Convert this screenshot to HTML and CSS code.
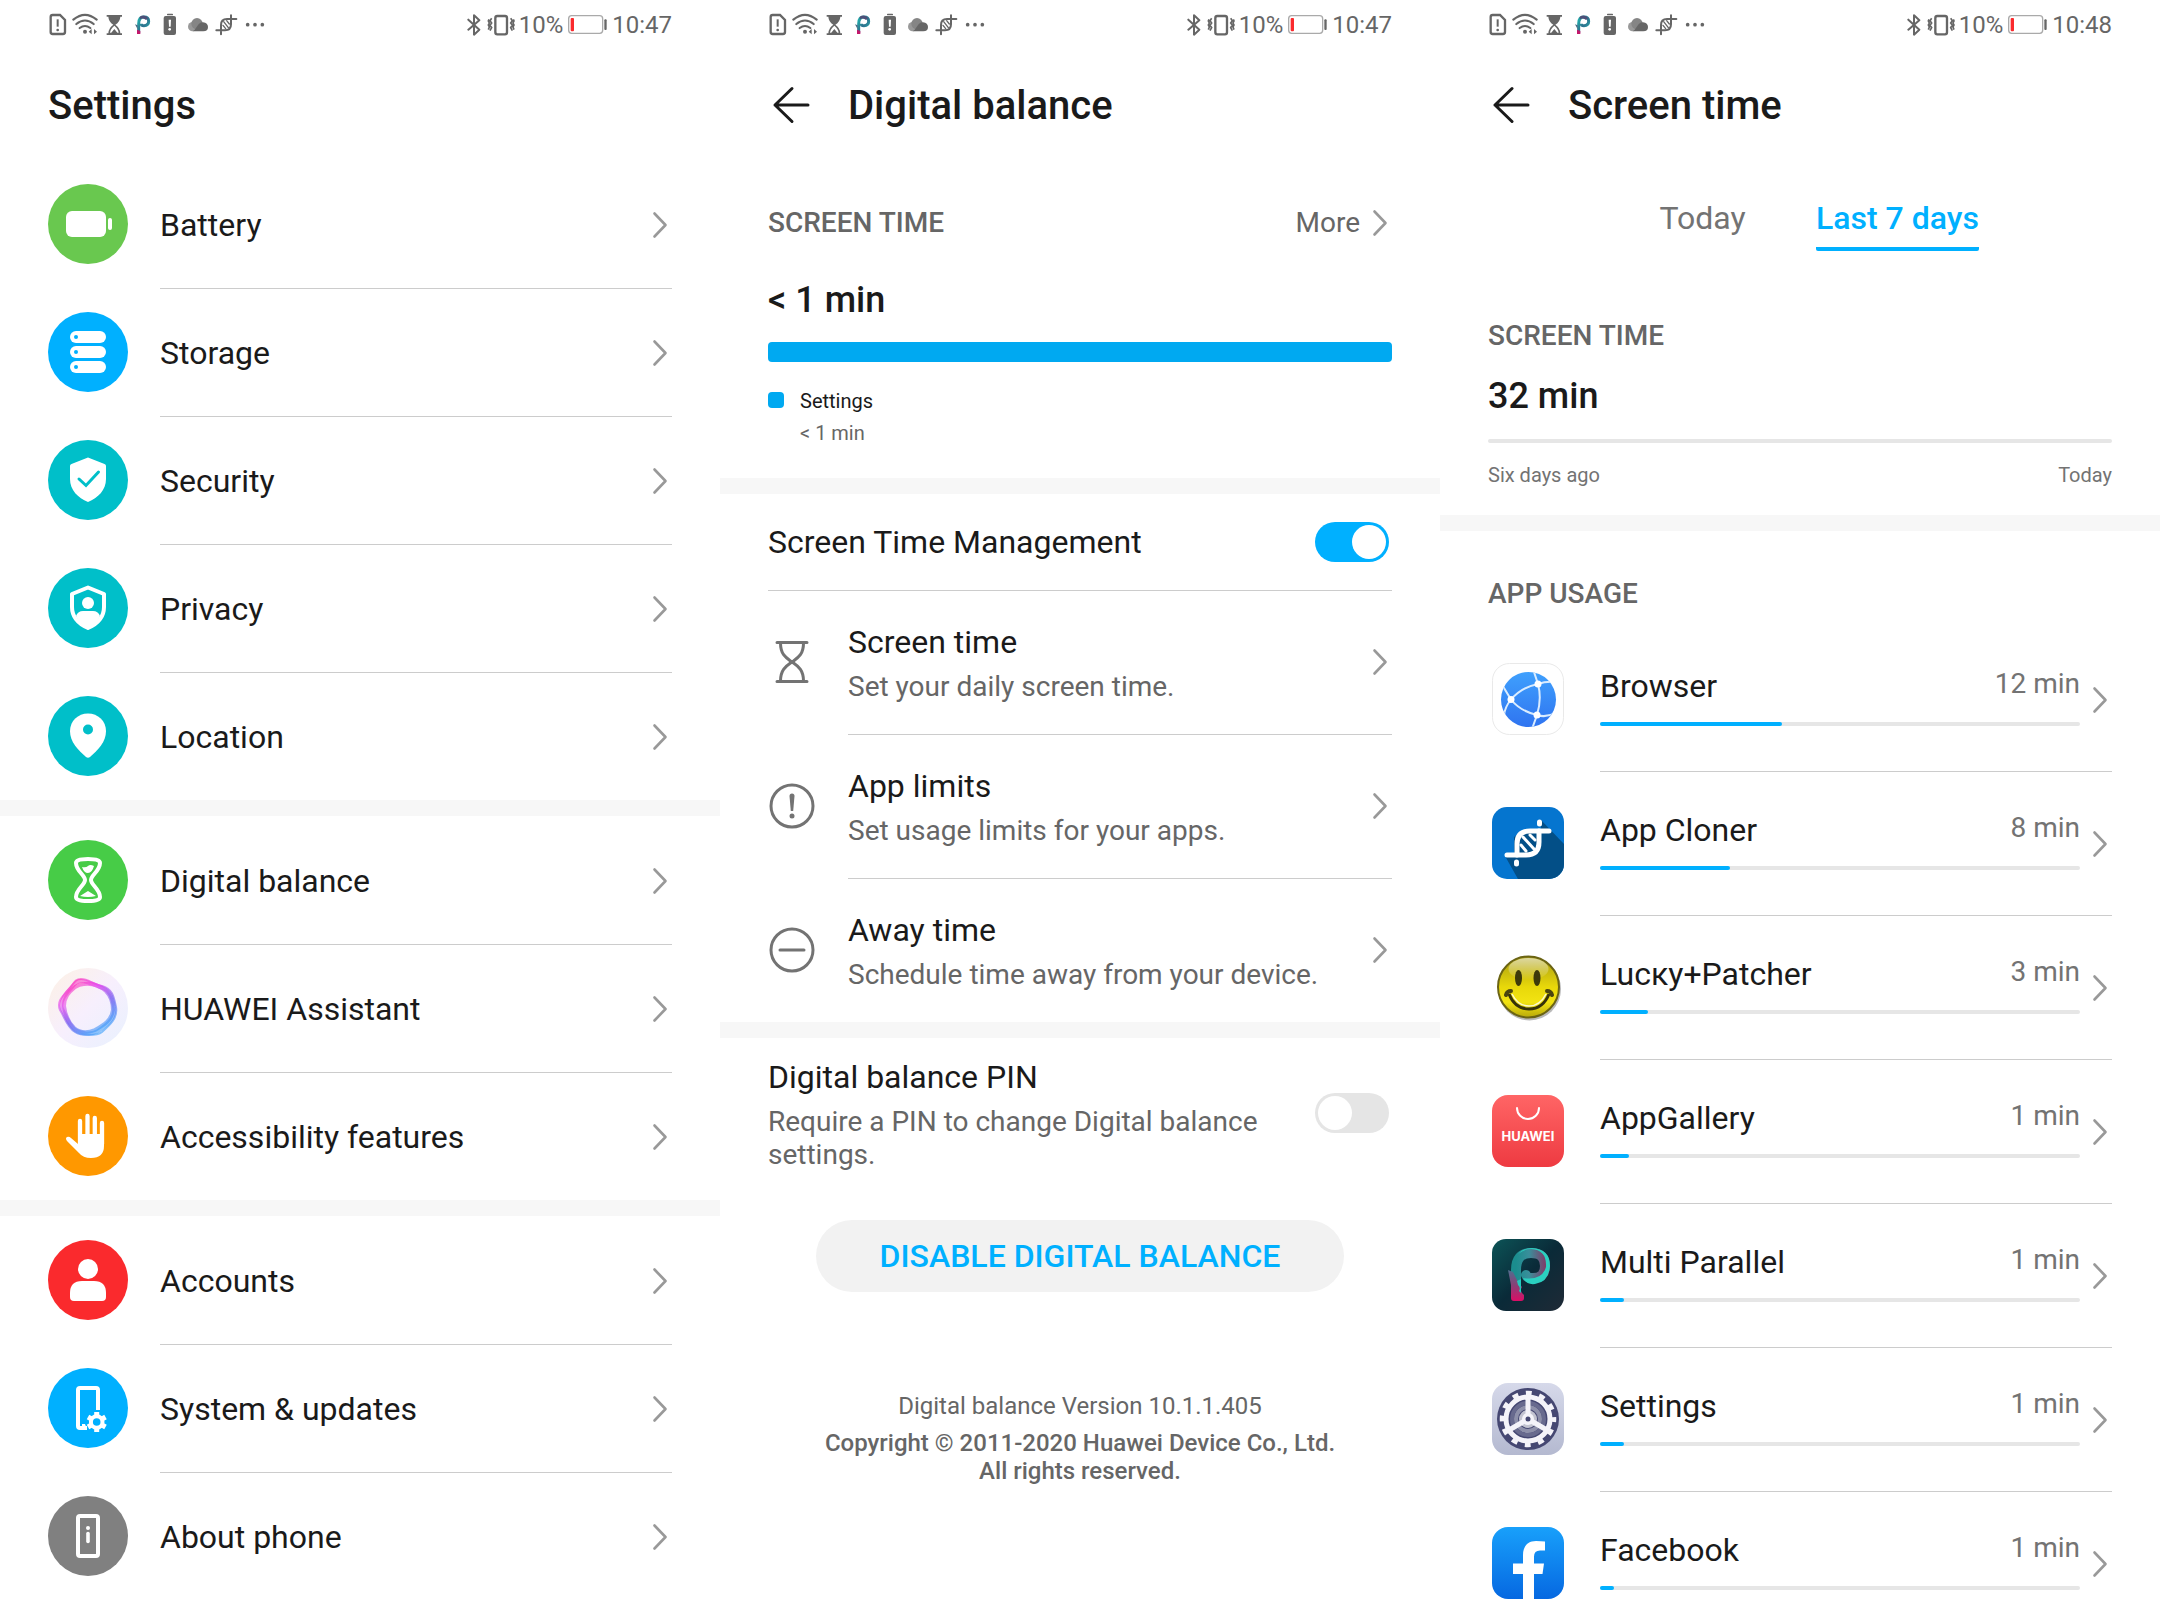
FILE: index.html
```html
<!DOCTYPE html>
<html lang="en">
<head>
    <meta charset="UTF-8">
    <meta name="viewport" content="width=device-width, initial-scale=1.0">
    <title>Digital balance</title>
    <link rel="stylesheet" href="styles.css">
</head>
<body>
    <!-- Shared icons -->
    <svg class="sprite" width="0" height="0" aria-hidden="true">
        <defs>
            <linearGradient id="p-small" x1="0" y1="0" x2="1" y2="1">
                <stop offset="0" stop-color="#1fb5b0"/>
                <stop offset="0.5" stop-color="#2f6f8c"/>
                <stop offset="1" stop-color="#22b8b4"/>
            </linearGradient>
        </defs>
        <symbol id="chevron" viewBox="0 0 24 32">
            <path d="M6.500 4.500L17.500 16 6.500 27.500" fill="none" stroke="#999" stroke-width="2.600" stroke-linecap="round" stroke-linejoin="round"/>
        </symbol>
        <symbol id="back" viewBox="0 0 48 48">
            <path d="M40 24H7M24 7.500L7 24l17 16.500" fill="none" stroke="#1a1a1a" stroke-width="3" stroke-linecap="round" stroke-linejoin="round"/>
        </symbol>
        <symbol id="notifications" viewBox="24 24 654 72">
            <!-- sim card -->
            <path d="M38 30h22l15 15v36q0 6-6 6H38q-6 0-6-6V36q0-6 6-6z" fill="none" stroke="#666" stroke-width="7"/>
            <path d="M53 43v22" stroke="#666" stroke-width="6"/>
            <circle cx="53" cy="75" r="4" fill="#666"/>
            <!-- wifi -->
            <g fill="none" stroke="#666" stroke-width="6.500" stroke-linecap="round">
                <path d="M100 44q35-29 70 0"/>
                <path d="M109 57q26-21 52 0"/>
                <path d="M119 69q16-12 32 0"/>
            </g>
            <circle cx="135" cy="80" r="6" fill="#666"/>
            <path d="M155 72v16l-9-8zM162 72v16l9-8z" fill="#666"/>
            <!-- hourglass -->
            <path d="M200 30h46v5h-5q-1 16-15 24 14 9 15 26h5v5h-46v-5h5q1-17 15-26-14-8-15-24h-5z" fill="#666"/>
            <path d="M223 62q12 10 13 21h-5q-8-9-8-9t-8 9h-5q1-11 13-21z" fill="#fff"/>
            <path d="M223 72l10 13h-20z" fill="#666"/>
            <!-- multi parallel -->
            <path d="M296 84V56q0-20 16-20 14 0 14 13t-14 13q-8 0-8-6" fill="none" stroke="url(#p-small)" stroke-width="9"/>
            <path d="M299 35q14-8 25 4l-6 6q-8-8-19-2z" fill="#4d4f78"/>
            <path d="M291 74l10 4v9h-10z" fill="#c2186b"/>
            <path d="M285 58l8 3v12z" fill="#4d6a85"/>
            <!-- low battery -->
            <rect x="381" y="26" width="18" height="5" rx="2" fill="#666"/>
            <rect x="371" y="33" width="37" height="57" rx="6" fill="#666"/>
            <path d="M386 44h7l-1 21h-5z" fill="#fff"/>
            <circle cx="389" cy="73" r="4" fill="#fff"/>
            <!-- cloud -->
            <circle cx="458" cy="65" r="14" fill="#999"/>
            <circle cx="471" cy="56" r="17" fill="#858585"/>
            <path d="M458 79q6-3 12-13 8-15 19-14 15 2 15 14 0 13-14 13z" fill="#666"/>
            <!-- dna -->
            <g fill="none" stroke="#666" stroke-width="6" stroke-linecap="round">
                <path d="M529 76h26q18 0 18-18V42"/>
                <path d="M589 42h-28q-18 0-18 18v16"/>
                <path d="M573 31v8M543 80v8"/>
                <path d="M551 50l14 18M560 47l8 10M549 61l8 10" stroke-width="4"/>
            </g>
            <!-- more -->
            <g fill="#666"><circle cx="623" cy="59" r="5.500"/><circle cx="645" cy="59" r="5.500"/><circle cx="667" cy="59" r="5.500"/></g>
        </symbol>
        <symbol id="radios" viewBox="24 24 144 72">
            <path d="M28 44l33 30-16 15V31l16 15-33 28" fill="none" stroke="#666" stroke-width="6" stroke-linecap="round" stroke-linejoin="round"/>
            <rect x="109" y="33" width="35" height="55" rx="6" fill="none" stroke="#666" stroke-width="7"/>
            <path d="M98 40l-5 7 5 7-5 7 5 7-5 9M90 43l-2 5 3 6-3 6 3 6-3 8M155 40l5 7-5 7 5 7-5 7 5 9M163 43l2 5-3 6 3 6-3 6 3 8" fill="none" stroke="#666" stroke-width="5"/>
        </symbol>
        <symbol id="charge" viewBox="321 24 123 72">
            <rect x="326" y="32" width="102" height="53" rx="9" fill="#fff" stroke="#aaa" stroke-width="4"/>
            <rect x="332" y="39" width="10" height="40" rx="3" fill="#fa2a2d"/>
            <rect x="433" y="43" width="7" height="32" rx="3" fill="#666"/>
        </symbol>
    </svg>

    <div class="screens">
        <!-- Settings -->
        <section class="screen">
            <div class="status-bar">
                <svg class="notifications"><use href="#notifications"/></svg>
                <div class="status-right">
                    <svg class="radios"><use href="#radios"/></svg>
                    <span>10%</span>
                    <svg class="charge"><use href="#charge"/></svg>
                    <span>10:47</span>
                </div>
            </div>
            <header class="title-bar">
                <h1>Settings</h1>
            </header>
            <nav class="settings-list">
                <a class="settings-row" href="#battery">
                    <svg class="round-icon" viewBox="0 0 80 80">
                        <circle cx="40" cy="40" r="40" fill="#69c84f"/>
                        <rect x="18" y="27" width="40" height="26" rx="6" fill="#fff"/>
                        <rect x="60" y="34" width="4" height="12" rx="2" fill="#fff"/>
                    </svg>
                    <span class="row-body">Battery <svg class="chevron"><use href="#chevron"/></svg></span>
                </a>
                <a class="settings-row" href="#storage">
                    <svg class="round-icon" viewBox="0 0 80 80">
                        <circle cx="40" cy="40" r="40" fill="#00b0ff"/>
                        <g fill="#fff">
                            <rect x="22" y="19" width="36" height="12" rx="6"/>
                            <rect x="22" y="34" width="36" height="12" rx="6"/>
                            <rect x="22" y="49" width="36" height="12" rx="6"/>
                        </g>
                        <g fill="#00b0ff"><circle cx="28" cy="25" r="2"/><circle cx="28" cy="40" r="2"/><circle cx="28" cy="55" r="2"/></g>
                    </svg>
                    <span class="row-body">Storage <svg class="chevron"><use href="#chevron"/></svg></span>
                </a>
                <a class="settings-row" href="#security">
                    <svg class="round-icon" viewBox="0 0 80 80">
                        <circle cx="40" cy="40" r="40" fill="#00bfc9"/>
                        <path d="M40 17.500L56.500 24Q58 24.500 58 26V39C58 50 50 58 40 62 30 58 22 50 22 39V26Q22 24.500 23.500 24z" fill="#fff"/>
                        <path d="M31 39l7 6.500L50.500 32" fill="none" stroke="#00bfc9" stroke-width="3" stroke-linecap="round"/>
                    </svg>
                    <span class="row-body">Security <svg class="chevron"><use href="#chevron"/></svg></span>
                </a>
                <a class="settings-row" href="#privacy">
                    <svg class="round-icon" viewBox="0 0 80 80">
                        <circle cx="40" cy="40" r="40" fill="#00bfc9"/>
                        <path d="M40 19.500L56 26V39C56 49 49 56 40 60 31 56 24 49 24 39V26z" fill="none" stroke="#fff" stroke-width="4" stroke-linejoin="round"/>
                        <circle cx="40" cy="35" r="6" fill="#fff"/>
                        <path d="M28 48q2-5 7-5h10q5 0 7 5-4 8-12 12-8-4-12-12z" fill="#fff"/>
                    </svg>
                    <span class="row-body">Privacy <svg class="chevron"><use href="#chevron"/></svg></span>
                </a>
                <a class="settings-row" href="#location">
                    <svg class="round-icon" viewBox="0 0 80 80">
                        <circle cx="40" cy="40" r="40" fill="#00bfc9"/>
                        <path d="M40 17.500C50 17.500 58 25 58 35 58 46 50 54 42 61Q40 62.500 38 61C30 54 22 46 22 35 22 25 30 17.500 40 17.500z" fill="#fff"/>
                        <circle cx="40" cy="33.500" r="5" fill="#00bfc9"/>
                    </svg>
                    <span class="row-body">Location <svg class="chevron"><use href="#chevron"/></svg></span>
                </a>
            </nav>
            <nav class="settings-list banded">
                <a class="settings-row" href="#digital-balance">
                    <svg class="round-icon" viewBox="0 0 80 80">
                        <circle cx="40" cy="40" r="40" fill="#47cc47"/>
                        <path d="M28 23q0-4 12-4t12 4c0 8-9 12-9 17s9 9 9 17q0 4-12 4t-12-4c0-8 9-12 9-17s-9-9-9-17z" fill="none" stroke="#fff" stroke-width="4"/>
                        <path d="M34 27q4 1 6-1t6 0q-2 7-6 7t-6-6zM32 56l8-5 8 5q-8 2-16 0z" fill="#fff"/>
                    </svg>
                    <span class="row-body">Digital balance <svg class="chevron"><use href="#chevron"/></svg></span>
                </a>
                <a class="settings-row" href="#assistant">
                    <svg class="round-icon" viewBox="0 0 80 80">
                        <defs>
                            <linearGradient id="halo" x1="0" y1="0" x2="1" y2="1">
                                <stop offset="0" stop-color="#fdf1e4"/>
                                <stop offset="0.500" stop-color="#f7effd"/>
                                <stop offset="1" stop-color="#e8f1fe"/>
                            </linearGradient>
                            <linearGradient id="ring" x1="0.200" y1="0" x2="0.800" y2="1">
                                <stop offset="0" stop-color="#ff2fb4"/>
                                <stop offset="0.250" stop-color="#e445ee"/>
                                <stop offset="0.550" stop-color="#7a5cf0"/>
                                <stop offset="1" stop-color="#2ea8fa"/>
                            </linearGradient>
                        </defs>
                        <circle cx="40" cy="40" r="40" fill="url(#halo)"/>
                        <g fill="none" stroke="url(#ring)">
                            <path d="M33 11C41 11 44 16 54 18 65 21 66 30 68 39 70 50 62 57 54 64 49 68 33 68 27 64 19 59 17 50 12 42 8 33 16 27 22 20 26 15 27 11 33 11z" stroke-width="2" opacity="0.600"/>
                            <path d="M31 13C39 12 46 17 55 20 63 23 65 32 66 39 68 50 59 57 50 63 43 67 33 66 27 62 20 56 19 50 14 41 11 33 18 25 24 19 27 16 27 14 31 13z" stroke-width="4" opacity="0.550"/>
                            <path d="M36 16C44 15 52 18 58 23 64 29 65 35 65 42 64 52 56 57 47 62 40 65 32 65 26 60 20 54 17 47 16 38 16 29 21 24 27 19 30 17 32 16 36 16z" stroke-width="4" opacity="0.600"/>
                        </g>
                    </svg>
                    <span class="row-body">HUAWEI Assistant <svg class="chevron"><use href="#chevron"/></svg></span>
                </a>
                <a class="settings-row" href="#accessibility">
                    <svg class="round-icon" viewBox="0 0 80 80">
                        <circle cx="40" cy="40" r="40" fill="#ff9800"/>
                        <path d="M32 25v24M39.500 20v22M46.800 22v22M54 27v21" stroke="#fff" stroke-width="4.300" stroke-linecap="round"/>
                        <path d="M30 38h26v12q0 12-13 12-8 0-12-5L19 45q-2-3 0-4t4 1l7 6z" fill="#fff"/>
                    </svg>
                    <span class="row-body">Accessibility features <svg class="chevron"><use href="#chevron"/></svg></span>
                </a>
            </nav>
            <nav class="settings-list banded">
                <a class="settings-row" href="#accounts">
                    <svg class="round-icon" viewBox="0 0 80 80">
                        <circle cx="40" cy="40" r="40" fill="#fa2a2d"/>
                        <circle cx="40" cy="29" r="10" fill="#fff"/>
                        <path d="M34 41h12q12 0 12 12v4q0 4-4 4H26q-4 0-4-4v-4q0-12 12-12z" fill="#fff"/>
                    </svg>
                    <span class="row-body">Accounts <svg class="chevron"><use href="#chevron"/></svg></span>
                </a>
                <a class="settings-row" href="#system">
                    <svg class="round-icon" viewBox="0 0 80 80">
                        <circle cx="40" cy="40" r="40" fill="#00b0ff"/>
                        <path d="M50 42V22q0-2-2-2H32q-2 0-2 2v36q0 2 2 2h7" fill="none" stroke="#fff" stroke-width="4"/>
                        <path d="M34 56h3l2 5h-5z" fill="#fff"/>
                        <circle cx="48.700" cy="54" r="5.800" fill="none" stroke="#fff" stroke-width="4"/>
                        <path d="M48.700 44v4M48.700 60v4M40 49l3.500 2M54 57l3.500 2M40 59l3.500-2M54 51l3.500-2" stroke="#fff" stroke-width="5"/>
                    </svg>
                    <span class="row-body">System &amp; updates <svg class="chevron"><use href="#chevron"/></svg></span>
                </a>
                <a class="settings-row" href="#about">
                    <svg class="round-icon" viewBox="0 0 80 80">
                        <circle cx="40" cy="40" r="40" fill="#808080"/>
                        <rect x="30" y="20" width="20" height="40" rx="2" fill="none" stroke="#fff" stroke-width="4"/>
                        <circle cx="40" cy="32" r="2" fill="#fff"/>
                        <path d="M40 37.500v8" stroke="#fff" stroke-width="3.600" stroke-linecap="round"/>
                    </svg>
                    <span class="row-body">About phone <svg class="chevron"><use href="#chevron"/></svg></span>
                </a>
            </nav>
        </section>

        <!-- Digital balance -->
        <section class="screen">
            <div class="status-bar">
                <svg class="notifications"><use href="#notifications"/></svg>
                <div class="status-right">
                    <svg class="radios"><use href="#radios"/></svg>
                    <span>10%</span>
                    <svg class="charge"><use href="#charge"/></svg>
                    <span>10:47</span>
                </div>
            </div>
            <header class="title-bar">
                <a class="back" href="#settings" aria-label="Back"><svg><use href="#back"/></svg></a>
                <h1>Digital balance</h1>
            </header>
            <div class="summary">
                <div class="summary-head">
                    <h2>SCREEN TIME</h2>
                    <a class="more" href="#more">More <svg class="chevron"><use href="#chevron"/></svg></a>
                </div>
                <p class="total">&lt; 1 min</p>
                <div class="usage-bar"></div>
                <div class="legend">
                    <span class="legend-dot"></span>
                    <div>
                        <p>Settings</p>
                        <p class="muted">&lt; 1 min</p>
                    </div>
                </div>
            </div>
            <div class="banded">
                <div class="switch-row">
                    <label for="management">Screen Time Management</label>
                    <input class="switch" type="checkbox" id="management" checked>
                </div>
                <a class="option-row first" href="#screen-time">
                    <svg class="line-icon" viewBox="0 0 48 48">
                        <path d="M9 4.500h30M9 43.500h30M12.500 5c0 12 6 15 11.500 19 5.500-4 11.500-7 11.500-19M12.500 43c0-12 6-15 11.500-19 5.500 4 11.500 7 11.500 19"/>
                    </svg>
                    <span class="option-body">
                        <span class="option-text">
                            <span class="option-title">Screen time</span>
                            <span class="option-note">Set your daily screen time.</span>
                        </span>
                        <svg class="chevron"><use href="#chevron"/></svg>
                    </span>
                </a>
                <a class="option-row" href="#app-limits">
                    <svg class="line-icon" viewBox="0 0 48 48">
                        <circle cx="24" cy="24" r="21"/>
                        <path d="M21.500 14q0-2.500 2.500-2.500t2.500 2.500l-1.300 15h-2.400z" fill="#737373" stroke="none"/>
                        <circle cx="24" cy="34" r="2.500" fill="#737373" stroke="none"/>
                    </svg>
                    <span class="option-body">
                        <span class="option-text">
                            <span class="option-title">App limits</span>
                            <span class="option-note">Set usage limits for your apps.</span>
                        </span>
                        <svg class="chevron"><use href="#chevron"/></svg>
                    </span>
                </a>
                <a class="option-row" href="#away-time">
                    <svg class="line-icon" viewBox="0 0 48 48">
                        <circle cx="24" cy="24" r="21"/>
                        <path d="M12 24h24"/>
                    </svg>
                    <span class="option-body">
                        <span class="option-text">
                            <span class="option-title">Away time</span>
                            <span class="option-note">Schedule time away from your device.</span>
                        </span>
                        <svg class="chevron"><use href="#chevron"/></svg>
                    </span>
                </a>
            </div>
            <div class="banded">
                <div class="switch-row pin-row">
                    <label class="option-text" for="pin">
                        <span class="option-title">Digital balance PIN</span>
                        <span class="option-note">Require a PIN to change Digital balance settings.</span>
                    </label>
                    <input class="switch" type="checkbox" id="pin">
                </div>
                <button class="disable" type="button">DISABLE DIGITAL BALANCE</button>
                <footer>
                    <p>Digital balance Version 10.1.1.405</p>
                    <p class="copyright">Copyright &copy; 2011-2020 Huawei Device Co., Ltd.<br>All rights reserved.</p>
                </footer>
            </div>
        </section>

        <!-- Screen time -->
        <section class="screen">
            <div class="status-bar">
                <svg class="notifications"><use href="#notifications"/></svg>
                <div class="status-right">
                    <svg class="radios"><use href="#radios"/></svg>
                    <span>10%</span>
                    <svg class="charge"><use href="#charge"/></svg>
                    <span>10:48</span>
                </div>
            </div>
            <header class="title-bar">
                <a class="back" href="#digital-balance" aria-label="Back"><svg><use href="#back"/></svg></a>
                <h1>Screen time</h1>
            </header>
            <div class="tabs">
                <button type="button">Today</button>
                <button type="button" class="active">Last 7 days</button>
            </div>
            <div class="week">
                <h2>SCREEN TIME</h2>
                <p class="total">32 min</p>
                <div class="week-line"></div>
                <div class="week-labels"><span>Six days ago</span><span>Today</span></div>
            </div>
            <div class="banded app-usage">
                <h2>APP USAGE</h2>
                <a class="app-row" href="#browser">
                    <svg class="app-icon" viewBox="0 0 72 72">
                        <defs>
                            <linearGradient id="globe" x1="0" y1="0" x2="0" y2="1">
                                <stop offset="0" stop-color="#3fa0fd"/>
                                <stop offset="1" stop-color="#2f74f0"/>
                            </linearGradient>
                            <clipPath id="globe-clip"><circle cx="36.500" cy="36.500" r="27.500"/></clipPath>
                        </defs>
                        <rect x="0.500" y="0.500" width="71" height="71" rx="17" fill="#fff" stroke="#e9e9e9"/>
                        <circle cx="36.500" cy="36.500" r="27.500" fill="url(#globe)"/>
                        <g clip-path="url(#globe-clip)" fill="none" stroke="#d9ecff" stroke-width="2">
                            <path d="M19 36.500Q30 24 46 21M46 21q4 15-1 31M19 36.500Q28 48 45 52M46 21l-5-15M46 21q8-3 18-2M19 36.500L9 20M19 36.500Q13 44 12 52M45 52l-5 14M45 52q9 3 18-2"/>
                        </g>
                        <g fill="#fff"><circle cx="19" cy="36.500" r="3.500"/><circle cx="46" cy="21" r="3.500"/><circle cx="45" cy="52" r="3.500"/></g>
                    </svg>
                    <span class="app-body">
                        <span class="app-info">
                            <span class="app-line"><span class="app-name">Browser</span><span class="app-time">12 min</span></span>
                            <span class="track"><span class="fill" style="width: 38%"></span></span>
                        </span>
                        <svg class="chevron"><use href="#chevron"/></svg>
                    </span>
                </a>
                <a class="app-row" href="#app-cloner">
                    <svg class="app-icon" viewBox="0 0 72 72">
                        <defs><clipPath id="cloner-clip"><rect width="72" height="72" rx="15"/></clipPath></defs>
                        <g clip-path="url(#cloner-clip)">
                            <rect width="72" height="72" fill="#0575cf"/>
                            <path d="M13 49L26 72H72V37L49 13V24L32 23 22 30 22 46z" fill="#034f87"/>
                        </g>
                        <g fill="none" stroke="#fff" stroke-width="5" stroke-linecap="round">
                            <path d="M15 48h19q13 0 13-13V24"/>
                            <path d="M57 24H38q-13 0-13 13v11"/>
                            <path d="M47.500 15v2M24.500 55v2"/>
                            <path d="M31 30l11 12M38 28l5 5M29 38l5 6" stroke-width="3"/>
                        </g>
                    </svg>
                    <span class="app-body">
                        <span class="app-info">
                            <span class="app-line"><span class="app-name">App Cloner</span><span class="app-time">8 min</span></span>
                            <span class="track"><span class="fill" style="width: 27%"></span></span>
                        </span>
                        <svg class="chevron"><use href="#chevron"/></svg>
                    </span>
                </a>
                <a class="app-row" href="#patcher">
                    <svg class="app-icon" viewBox="0 0 72 72">
                        <defs>
                            <linearGradient id="smile" x1="0" y1="0" x2="0" y2="1">
                                <stop offset="0" stop-color="#a89b12"/>
                                <stop offset="0.500" stop-color="#e8d80a"/>
                                <stop offset="0.750" stop-color="#f2e312"/>
                                <stop offset="1" stop-color="#b8a90a"/>
                            </linearGradient>
                            <linearGradient id="shine" x1="0" y1="0" x2="0" y2="1">
                                <stop offset="0" stop-color="#fff" stop-opacity="0.600"/>
                                <stop offset="1" stop-color="#fff" stop-opacity="0"/>
                            </linearGradient>
                        </defs>
                        <circle cx="37.500" cy="38" r="31.500" fill="#8a8a8a" opacity="0.600"/>
                        <circle cx="36.500" cy="36" r="30.500" fill="url(#smile)" stroke="#6b6414" stroke-width="2"/>
                        <ellipse cx="36.500" cy="18" rx="20" ry="11" fill="url(#shine)"/>
                        <ellipse cx="26.500" cy="27" rx="3.500" ry="8" fill="#3d3a0a"/>
                        <ellipse cx="45" cy="27" rx="3.500" ry="8" fill="#3d3a0a"/>
                        <path d="M14 44q1-4 5-4M60 44q-1-4-5-4" fill="none" stroke="#4a4510" stroke-width="4" stroke-linecap="round"/>
                        <path d="M17 43q6 15 20 15t20-15" fill="none" stroke="#36320a" stroke-width="3"/>
                        <path d="M20 43q6 12 17 12t17-12" fill="none" stroke="#fff" stroke-width="1.500" opacity="0.800"/>
                    </svg>
                    <span class="app-body">
                        <span class="app-info">
                            <span class="app-line"><span class="app-name">Lucкy+Patcher</span><span class="app-time">3 min</span></span>
                            <span class="track"><span class="fill" style="width: 10%"></span></span>
                        </span>
                        <svg class="chevron"><use href="#chevron"/></svg>
                    </span>
                </a>
                <a class="app-row" href="#appgallery">
                    <svg class="app-icon" viewBox="0 0 72 72">
                        <defs>
                            <linearGradient id="gallery" x1="0" y1="0" x2="0" y2="1">
                                <stop offset="0" stop-color="#ff6565"/>
                                <stop offset="1" stop-color="#ee3a41"/>
                            </linearGradient>
                        </defs>
                        <rect width="72" height="72" rx="16" fill="url(#gallery)"/>
                        <path d="M25 13a11 11 0 0 0 22 0" fill="none" stroke="#fff" stroke-width="2" stroke-linecap="round"/>
                        <text class="brand" x="36" y="46" text-anchor="middle">HUAWEI</text>
                    </svg>
                    <span class="app-body">
                        <span class="app-info">
                            <span class="app-line"><span class="app-name">AppGallery</span><span class="app-time">1 min</span></span>
                            <span class="track"><span class="fill" style="width: 6%"></span></span>
                        </span>
                        <svg class="chevron"><use href="#chevron"/></svg>
                    </span>
                </a>
                <a class="app-row" href="#multi-parallel">
                    <svg class="app-icon" viewBox="0 0 72 72">
                        <defs>
                            <linearGradient id="night" x1="0" y1="0" x2="1" y2="1">
                                <stop offset="0" stop-color="#0c5457"/>
                                <stop offset="0.500" stop-color="#0a2a38"/>
                                <stop offset="1" stop-color="#1f2a36"/>
                            </linearGradient>
                            <linearGradient id="curl" x1="0" y1="0" x2="1" y2="0">
                                <stop offset="0" stop-color="#1b8d8e"/>
                                <stop offset="0.450" stop-color="#3a8f9b"/>
                                <stop offset="1" stop-color="#7c3f6b"/>
                            </linearGradient>
                            <linearGradient id="stem" x1="0" y1="0" x2="0" y2="1">
                                <stop offset="0" stop-color="#4f6f8f"/>
                                <stop offset="0.500" stop-color="#8b3f76"/>
                                <stop offset="1" stop-color="#dc0d66"/>
                            </linearGradient>
                        </defs>
                        <rect width="72" height="72" rx="14" fill="url(#night)"/>
                        <path d="M24 50V31q0-17 15-17 14 0 14 13 0 12-12 12-6 0-7-3" fill="none" stroke="url(#curl)" stroke-width="10" stroke-linecap="round"/>
                        <path d="M26 15q5-6 14-6 18 1 18 18-1 16-15 18-9 1-12-6 19 3 23-11 1-17-15-18-7 0-13 5z" fill="#2ad0c0"/>
                        <path d="M16 31l5 2 5 10 4 5q-3 4 2 8v3q0 3-3 3h-7q-3 0-3-3V46z" fill="url(#stem)"/>
                        <path d="M25 42l4-2v14l-2-2q2-3-1-6z" fill="#25c9bd"/>
                    </svg>
                    <span class="app-body">
                        <span class="app-info">
                            <span class="app-line"><span class="app-name">Multi Parallel</span><span class="app-time">1 min</span></span>
                            <span class="track"><span class="fill" style="width: 5%"></span></span>
                        </span>
                        <svg class="chevron"><use href="#chevron"/></svg>
                    </span>
                </a>
                <a class="app-row" href="#settings">
                    <svg class="app-icon" viewBox="0 0 72 72">
                        <defs>
                            <linearGradient id="silver" x1="0" y1="0" x2="0" y2="1">
                                <stop offset="0" stop-color="#d6d9ea"/>
                                <stop offset="1" stop-color="#b4b9d0"/>
                            </linearGradient>
                        </defs>
                        <rect width="72" height="72" rx="16" fill="url(#silver)"/>
                        <circle cx="36" cy="36" r="31" fill="#454772"/>
                        <circle cx="36" cy="36" r="12" fill="none" stroke="#8e90aa" stroke-width="4"/>
                        <circle cx="36" cy="36" r="16" fill="none" stroke="#686a8e" stroke-width="4"/>
                        <circle cx="36" cy="36" r="9" fill="#c2c3d0"/>
                        <circle cx="36" cy="36" r="22" fill="none" stroke="#f4f3f9" stroke-width="5"/>
                        <circle cx="36" cy="36" r="26" fill="none" stroke="#f4f3f9" stroke-width="4.500" stroke-dasharray="6 7.614" stroke-dashoffset="3"/>
                        <path d="M36 15v21M36 36l-18 10.500M36 36l18 10.500" stroke="#f4f3f9" stroke-width="5"/>
                        <circle cx="36" cy="36" r="6" fill="#f4f3f9"/>
                        <circle cx="36" cy="36" r="2.500" fill="#454772"/>
                    </svg>
                    <span class="app-body">
                        <span class="app-info">
                            <span class="app-line"><span class="app-name">Settings</span><span class="app-time">1 min</span></span>
                            <span class="track"><span class="fill" style="width: 5%"></span></span>
                        </span>
                        <svg class="chevron"><use href="#chevron"/></svg>
                    </span>
                </a>
                <a class="app-row" href="#facebook">
                    <svg class="app-icon" viewBox="0 0 72 72">
                        <defs>
                            <linearGradient id="sky" x1="0" y1="0" x2="0" y2="1">
                                <stop offset="0" stop-color="#18a0fb"/>
                                <stop offset="1" stop-color="#0668e1"/>
                            </linearGradient>
                        </defs>
                        <rect width="72" height="72" rx="16" fill="url(#sky)"/>
                        <path d="M31 72V47H21V36.500H31V28C31 19 36 14 44 14q5 0 9 .5V23.500H48q-6 0-6 6v7H52L50.500 47H42V72z" fill="#fff"/>
                    </svg>
                    <span class="app-body">
                        <span class="app-info">
                            <span class="app-line"><span class="app-name">Facebook</span><span class="app-time">1 min</span></span>
                            <span class="track"><span class="fill" style="width: 3%"></span></span>
                        </span>
                        <svg class="chevron"><use href="#chevron"/></svg>
                    </span>
                </a>
            </div>
        </section>
    </div>
</body>
</html>
```
FILE: styles.css
```css
* {
    box-sizing: border-box;
}

body {
    font-family: Roboto, "Noto Sans", sans-serif;
    background-color: #fff;
    color: #1a1a1a;
    font-size: 32px;
    margin: 0;
}

h1, h2, p {
    margin: 0;
}

a {
    color: inherit;
    text-decoration: none;
}

svg {
    display: block;
    flex-shrink: 0;
}

.screens {
    display: grid;
    grid-template-columns: repeat(3, 1fr);
    height: 100vh;
    overflow: hidden;
}

/* Status bar and title */

.status-bar {
    display: flex;
    align-items: center;
    justify-content: space-between;
    height: 50px;
    padding: 0 48px;
    color: #666;
    font-size: 24px;
}

.status-right {
    display: flex;
    align-items: center;
    gap: 4px;
}

.notifications {
    width: 218px;
    height: 24px;
}

.radios {
    width: 48px;
    height: 24px;
}

.charge {
    width: 41px;
    height: 24px;
}

.title-bar {
    display: flex;
    align-items: center;
    gap: 32px;
    height: 110px;
    padding: 0 48px;
}

h1 {
    font-size: 40px;
    font-weight: 500;
}

h2 {
    color: #666;
    font-size: 28px;
    font-weight: 500;
    line-height: 32px;
}

.back svg {
    width: 48px;
    height: 48px;
}

.chevron {
    width: 24px;
    height: 32px;
}

.banded {
    border-top: 16px solid #f7f7f7;
}

/* Settings list */

.settings-row {
    display: flex;
    align-items: center;
    gap: 32px;
    height: 128px;
    padding: 0 48px;
}

.round-icon {
    width: 80px;
    height: 80px;
}

.row-body {
    display: flex;
    flex: 1;
    align-items: center;
    justify-content: space-between;
    height: 100%;
    border-top: 1px solid #ccc;
}

.settings-row:first-child .row-body {
    border-top-color: transparent;
}

/* Digital balance */

.summary {
    padding: 47px 48px 29px;
}

.summary-head, .more {
    display: flex;
    align-items: center;
    justify-content: space-between;
}

.more {
    gap: 8px;
    color: #666;
    font-size: 28px;
    line-height: 32px;
}

.total {
    font-size: 36px;
    font-weight: 500;
    line-height: 48px;
}

.summary .total {
    margin-top: 37px;
}

.usage-bar {
    height: 20px;
    margin-top: 18px;
    border-radius: 4px;
    background-color: #00a9f1;
}

.legend {
    display: flex;
    gap: 16px;
    margin-top: 23px;
    font-size: 20px;
    line-height: 32px;
}

.legend-dot {
    width: 16px;
    height: 16px;
    margin-top: 7px;
    border-radius: 4px;
    background-color: #00a9f1;
}

.muted {
    color: #666;
}

.switch-row {
    display: flex;
    align-items: center;
    justify-content: space-between;
    min-height: 96px;
    margin: 0 48px;
    padding-right: 3px;
}

.switch {
    appearance: none;
    flex-shrink: 0;
    width: 74px;
    height: 40px;
    margin: 0;
    padding: 3px;
    border-radius: 20px;
    background-color: #e5e5e5;
    cursor: pointer;
}

.switch::before {
    content: "";
    display: block;
    width: 34px;
    height: 34px;
    border-radius: 50%;
    background-color: #fff;
}

.switch:checked {
    background-color: #00b0ff;
}

.switch:checked::before {
    margin-left: auto;
}

.option-row {
    display: flex;
    align-items: center;
    gap: 32px;
    height: 144px;
    padding: 0 48px;
}

.option-row.first {
    padding: 0;
    margin: 0 48px;
    box-shadow: inset 0 1px #ccc;
}

.line-icon {
    width: 48px;
    height: 48px;
    fill: none;
    stroke: #737373;
    stroke-width: 3;
    stroke-linecap: round;
}

.option-body {
    display: flex;
    flex: 1;
    align-items: center;
    justify-content: space-between;
    height: 100%;
    box-shadow: inset 0 1px #ccc;
}

.first .option-body {
    box-shadow: none;
}

.option-title, .option-note {
    display: block;
}

.option-title {
    line-height: 48px;
}

.option-note {
    margin: 4px 0 3px;
    color: #666;
    font-size: 28px;
    line-height: 33px;
}

.pin-row {
    gap: 48px;
    min-height: 150px;
}

.disable {
    display: block;
    height: 72px;
    margin: 32px auto 0;
    padding: 0 64px;
    border: none;
    border-radius: 36px;
    background-color: #f2f2f2;
    color: #00b0ff;
    font-family: inherit;
    font-size: 32px;
    font-weight: 500;
    cursor: pointer;
}

footer {
    margin-top: 100px;
    color: #666;
    font-size: 24px;
    line-height: 28px;
    text-align: center;
}

.copyright {
    margin-top: 9px;
    font-weight: 500;
}

/* Screen time */

.tabs {
    display: grid;
    grid-template-columns: 1fr 1fr;
    gap: 32px;
    width: max-content;
    margin: 34px auto 0;
}

.tabs button {
    padding: 0 0 5px;
    border: none;
    border-bottom: 4px solid transparent;
    background: none;
    color: #737373;
    font-family: inherit;
    font-size: 32px;
    line-height: 48px;
    cursor: pointer;
}

.tabs .active {
    border-bottom-color: #00b0ff;
    border-radius: 2px;
    color: #00b0ff;
    font-weight: 500;
}

.week {
    padding: 69px 48px 24px;
}

.week .total {
    margin-top: 20px;
}

.week-line {
    height: 4px;
    margin-top: 19px;
    border-radius: 2px;
    background-color: #e6e6e6;
}

.week-labels {
    display: flex;
    justify-content: space-between;
    margin-top: 16px;
    color: #737373;
    font-size: 20px;
    line-height: 32px;
}

.app-usage h2 {
    padding: 47px 48px 17px;
}

.app-row {
    display: flex;
    align-items: center;
    gap: 36px;
    height: 144px;
    padding: 0 48px 0 52px;
}

.app-icon {
    width: 72px;
    height: 72px;
}

.brand {
    fill: #fff;
    font-family: Inter, sans-serif;
    font-size: 13px;
    font-weight: 700;
}

.app-body {
    display: flex;
    flex: 1;
    align-items: center;
    gap: 8px;
    height: 100%;
    border-top: 1px solid #ccc;
}

h2 + .app-row .app-body {
    border-top-color: transparent;
}

.app-info {
    flex: 1;
    padding-bottom: 12px;
}

.app-line {
    display: flex;
    justify-content: space-between;
    line-height: 48px;
}

.app-time {
    color: #737373;
    font-size: 28px;
    line-height: 44px;
}

.track {
    display: block;
    height: 4px;
    margin-top: 12px;
    border-radius: 2px;
    background-color: #e6e6e6;
}

.fill {
    display: block;
    height: 4px;
    border-radius: 2px;
    background-color: #00b0ff;
}
```
